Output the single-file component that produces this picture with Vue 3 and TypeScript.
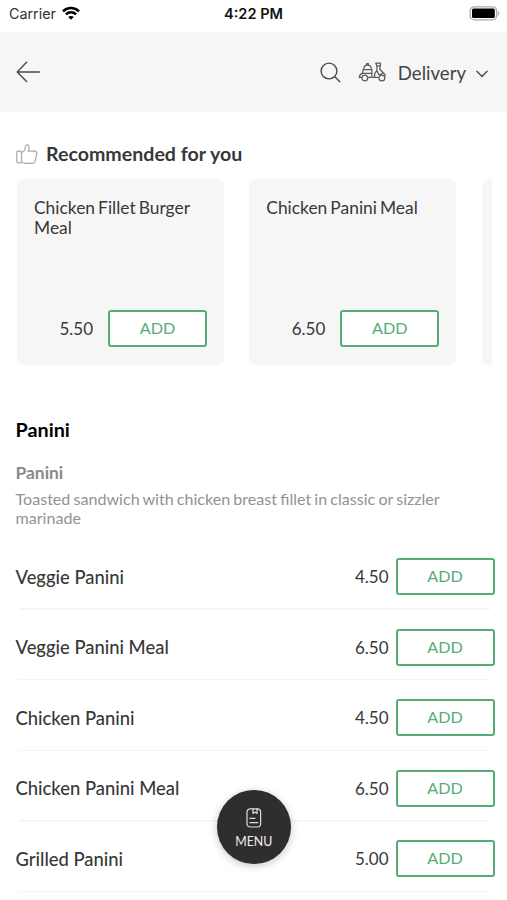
<script setup lang="ts">
interface MenuItem {
  name: string
  price: string
}

const recommended: MenuItem[] = [
  { name: 'Chicken Fillet Burger Meal', price: '5.50' },
  { name: 'Chicken Panini Meal', price: '6.50' },
]

const items: MenuItem[] = [
  { name: 'Veggie Panini', price: '4.50' },
  { name: 'Veggie Panini Meal', price: '6.50' },
  { name: 'Chicken Panini', price: '4.50' },
  { name: 'Chicken Panini Meal', price: '6.50' },
  { name: 'Grilled Panini', price: '5.00' },
]
</script>

<template>
  <div class="screen">
    <div class="status">
      <div class="carrier">
        <span>Carrier</span>
        <svg class="wifi" width="18" height="14" viewBox="0 0 18 14" fill="none" stroke="#000" stroke-width="2.5">
          <path d="M1 5.3C5.4.9 12.6.9 17 5.3" />
          <path d="M3.9 8.3c2.8-2.8 7.4-2.8 10.2 0" />
          <path d="M9 13.8 6.2 11c1.5-1.5 4.1-1.5 5.6 0z" fill="#000" stroke="none" />
        </svg>
      </div>
      <span class="time">4:22 PM</span>
      <svg class="battery" width="31" height="15" viewBox="0 0 31 15">
        <rect x="1.2" y=".8" width="26.4" height="13" rx="4" fill="#fff" stroke="#aaa" stroke-width="1.3" />
        <rect x="3" y="2.5" width="22.8" height="9.6" rx="1.5" fill="#000" />
        <path d="M28.8 5v4.8c2-.8 2-4 0-4.8z" fill="#aaa" />
      </svg>
    </div>

    <header class="toolbar">
      <svg class="back" width="24" height="22" viewBox="0 0 24 22" fill="none" stroke="#4a4a4a" stroke-width="1.4" stroke-linecap="round" stroke-linejoin="round">
        <path d="M23.3 11H1.2M10.6 1.2 1.2 11l9.4 9.5" />
      </svg>
      <svg class="search" width="21" height="21" viewBox="0 0 21 21" fill="none" stroke="#4a4a4a" stroke-width="1.4" stroke-linecap="round">
        <circle cx="9" cy="9" r="7.9" />
        <path d="m14.8 14.8 5 5" />
      </svg>
      <svg class="scooter" width="28" height="20" viewBox="0 0 28 20" fill="none" stroke="#5c5c5c" stroke-width="1.25" stroke-linecap="round" stroke-linejoin="round">
        <path d="M5.6 7.4c.2-2.7 1.7-4.3 3.9-4.3s3.8 1.6 4 4.3M8.6 2.9V1.7h1.8v1.2" />
        <path d="M5.1 7.5h8.8v7.9M5.3 7.5l-.9 3.8C2.6 11.8 1.5 13.2 1.2 15.4h2.4M4.6 11.4h9.1M10 15.4h10" />
        <circle cx="6.8" cy="15.9" r="2.9" />
        <circle cx="23.9" cy="15.9" r="2.9" />
        <path d="M17.8 1.2h4.6v2.7h-3.6l-1-2.7zM18.8 3.9l.2 4.5-2.4 3.2v3.8M22 3.9l-.2 3.4 3.4 3.5c1.3.8 2 1.8 2.1 3.2M19 8.4l1.6 4.1c1.5.2 3.1-.3 4.6-1.7" />
      </svg>
      <span class="mode">Delivery</span>
      <svg class="chevron" width="12" height="8" viewBox="0 0 12 8" fill="none" stroke="#4a4a4a" stroke-width="1.4" stroke-linecap="round" stroke-linejoin="round">
        <path d="m.9 1.2 5.1 5.2 5.1-5.2" />
      </svg>
    </header>

    <section class="recommended">
      <h2>
        <svg width="22" height="21" viewBox="0 0 22 21" fill="none" stroke="#a8a8a8" stroke-width="1.2" stroke-linejoin="round">
          <rect x=".8" y="7.2" width="4.7" height="11.6" rx="1.3" />
          <path d="M5.5 8.5c2.3-.9 3.8-2.7 3.8-5.5 0-3 3.8-2.8 3.8.7 0 1.3-.3 2.4-.8 3.5h6.3c1.7 0 2.5 1 2.2 2.4l-1.7 7.8c-.3 1.3-1 1.9-2.2 1.9H9.4c-1.7 0-2.2-1-3.9-1" />
        </svg>
        <span>Recommended for you</span>
      </h2>
      <div class="cards">
        <article v-for="item in recommended" :key="item.name" class="card">
          <p>{{ item.name }}</p>
          <div class="buy">
            <span class="price">{{ item.price }}</span>
            <button class="add">ADD</button>
          </div>
        </article>
        <article class="card"></article>
      </div>
    </section>

    <section class="category">
      <h3>Panini</h3>
      <h4>Panini</h4>
      <p class="description">Toasted sandwich with chicken breast fillet in classic or sizzler marinade</p>
      <ul>
        <li v-for="item in items" :key="item.name">
          <span class="name">{{ item.name }}</span>
          <span class="price">{{ item.price }}</span>
          <button class="add">ADD</button>
        </li>
      </ul>
    </section>

    <button class="menu">
      <svg width="16" height="20" viewBox="0 0 16 20" fill="none" stroke="#ddd" stroke-width="1.2" stroke-linecap="round" stroke-linejoin="round">
        <rect x="1" y=".8" width="13.6" height="18.2" rx="3.2" />
        <path d="M7 .8v4.6l2-1.3 2 1.3V.8M4 10.3h5M4 14.7h7.8" />
      </svg>
      <span>MENU</span>
    </button>
  </div>
</template>

<style>
body {
  margin: 0;
  background: #fff;
}
</style>

<style scoped>
.screen {
  position: relative;
  width: 507px;
  height: 900px;
  overflow: hidden;
  background: #fff;
  color: #383838;
  font-family: Lato, sans-serif;
}
h2, h3, h4, p, ul {
  margin: 0;
  padding: 0;
}
button {
  font-family: inherit;
  padding: 0;
}
.status {
  display: grid;
  grid-template-columns: 1fr auto 1fr;
  align-items: center;
  box-sizing: border-box;
  height: 32px;
  padding: 0 7px 5px 9px;
  font-family: Inter, sans-serif;
}
.carrier {
  display: flex;
  align-items: center;
  gap: 6px;
  font-size: 14.3px;
  color: #333;
}
.wifi {
  margin-top: -2px;
}
.time {
  margin-left: -2px;
  font-size: 14.6px;
  font-weight: 600;
  color: #111;
}
.battery {
  justify-self: end;
}
.toolbar {
  display: flex;
  align-items: center;
  box-sizing: border-box;
  height: 80px;
  padding: 0 19px 0 16px;
  background: #f6f6f6;
}
.search {
  margin-left: auto;
}
.scooter {
  margin-left: 17px;
}
.mode {
  margin: 1px 10px 0 12px;
  font-size: 18.6px;
  color: #444;
}
.chevron {
  margin-top: 4px;
}
.recommended h2 {
  display: flex;
  align-items: center;
  gap: 8px;
  height: 26px;
  padding: 29px 0 0 16px;
  font-size: 19.6px;
  font-weight: 700;
}
.recommended h2 span {
  margin-top: -2px;
}
.cards {
  display: flex;
  gap: 25.3px;
  margin: 12px 15px 0 17px;
  overflow: hidden;
}
.card {
  display: flex;
  flex: 0 0 207px;
  flex-direction: column;
  justify-content: space-between;
  box-sizing: border-box;
  height: 186px;
  padding: 18.5px 17px 18px 17px;
  border-radius: 7px;
  background: #f6f6f6;
}
.card p {
  font-size: 17.4px;
  line-height: 20.5px;
  word-spacing: -1.4px;
}
.buy {
  display: flex;
  align-items: center;
  justify-content: flex-end;
  gap: 15px;
}
.price {
  font-size: 17px;
}
.add {
  box-sizing: border-box;
  width: 99px;
  height: 37px;
  padding-bottom: 2px;
  border: 2px solid #55ad75;
  border-radius: 3px;
  background: #fff;
  color: #55ad75;
  font-size: 16.2px;
}
.category {
  padding: 51px 12.5px 0 15.5px;
}
.category h3 {
  font-size: 19.8px;
  line-height: 26px;
  color: #000;
}
.category h4 {
  margin-top: 20px;
  font-size: 17.4px;
  line-height: 22px;
  color: #8a8a8a;
}
.description {
  margin-top: 5px;
  font-size: 16.1px;
  line-height: 19px;
  word-spacing: -1px;
  color: #929292;
}
ul {
  margin-top: 12.3px;
  list-style: none;
}
li {
  display: flex;
  align-items: center;
  box-sizing: border-box;
  height: 70.6px;
  padding-top: 4px;
  background: linear-gradient(#f4f4f4, #f4f4f4) 3px 100% / 471px 1.5px no-repeat;
}
.name {
  flex: 1;
  font-size: 18.4px;
  font-weight: 500;
}
li .price {
  margin-right: 7px;
}
.menu {
  position: absolute;
  top: 790px;
  left: 217px;
  display: flex;
  flex-direction: column;
  align-items: center;
  box-sizing: border-box;
  width: 73.5px;
  height: 73.5px;
  padding-top: 18px;
  border: 0;
  border-radius: 50%;
  background: #2e2e2e;
  box-shadow: 0 2px 8px rgba(0, 0, 0, 0.22);
  color: #eee;
  font-size: 12.4px;
}
.menu span {
  margin-top: 6px;
}
</style>
